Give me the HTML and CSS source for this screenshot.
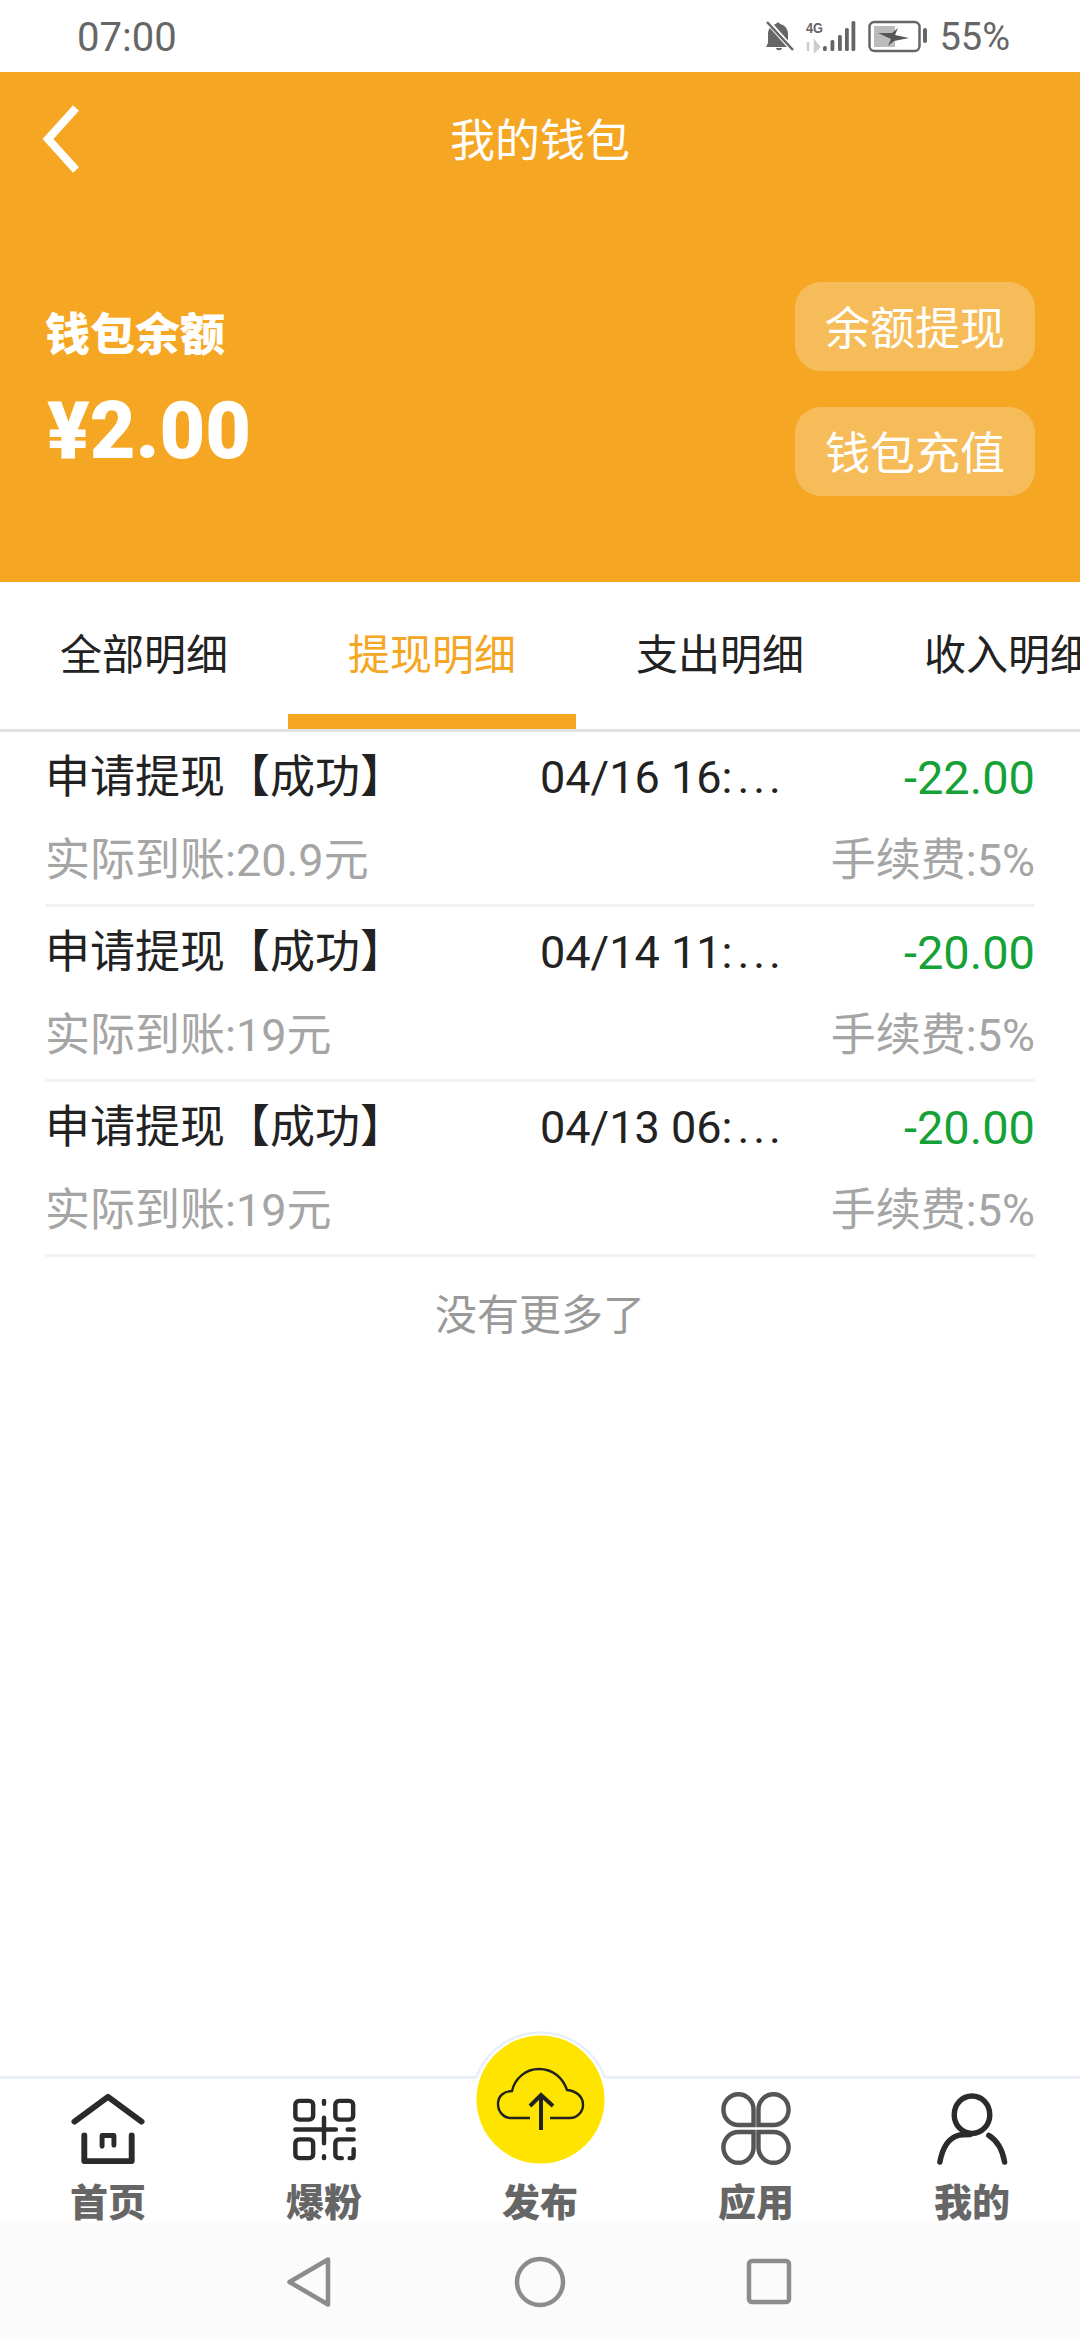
FILE: index.html
```html
<!DOCTYPE html>
<html lang="zh-CN">
<head>
    <meta charset="UTF-8">
    <meta name="viewport" content="width=device-width, initial-scale=1.0">
    <title>我的钱包</title>
    <link rel="stylesheet" href="styles.css">
</head>
<body>

    <div class="status-bar">
        <span class="status-time">07:00</span>
        <div class="status-right">
            <svg class="status-icons" width="175" height="45" viewBox="20 15 175 45">
                <path d="M33 47h-5l2-4V34c0-5 3-9 8-10 1-2 3-2 4 0 5 1 8 5 8 10v9l2 4z" fill="#666"/>
                <path d="M38 48c0 3 6 3 6 0z" fill="#666"/>
                <path d="M30 22l25 28" stroke="#fff" stroke-width="5"/>
                <path d="M29 22l26 28" stroke="#666" stroke-width="2.5"/>
                <text class="net-label" x="68" y="33" textLength="17" lengthAdjust="spacingAndGlyphs">4G</text>
                <path d="M70 42v9M77 42v9l4-4z" stroke="#ccc" stroke-width="2.500" fill="#ccc"/>
                <g fill="#666">
                    <rect x="85" y="46" width="3.800" height="5" rx="1.500"/>
                    <rect x="92.500" y="40" width="3.800" height="11" rx="1.500"/>
                    <rect x="100" y="35" width="3.800" height="16" rx="1.500"/>
                    <rect x="107" y="28" width="3.800" height="23" rx="1.500"/>
                    <rect x="113.500" y="21" width="3.800" height="30" rx="1.500"/>
                </g>
                <rect x="131.500" y="22" width="50" height="29" rx="5" fill="none" stroke="#666" stroke-width="2.500"/>
                <rect x="136" y="26" width="21" height="21" fill="#bbb"/>
                <path d="M140 33h14l6-5-3 7 14 3-15 3-6 5 3-7z" fill="#555"/>
                <rect x="185" y="28" width="4" height="15" rx="2" fill="#666"/>
            </svg>
            <span class="status-battery">55%</span>
        </div>
    </div>

    <header class="wallet-header">
        <div class="top-bar">
            <svg class="back-icon" width="48" height="76" viewBox="0 0 48 76">
                <path d="M36 6L8 37l28 31" fill="none" stroke="#fff" stroke-width="8"/>
            </svg>
            <h1>我的钱包</h1>
        </div>
        <div class="balance-row">
            <div class="balance">
                <div class="balance-label">钱包余额</div>
                <div class="balance-amount">¥2.00</div>
            </div>
            <div class="balance-actions">
                <a class="balance-button">余额提现</a>
                <a class="balance-button">钱包充值</a>
            </div>
        </div>
    </header>

    <nav class="tabs">
        <a class="tab">全部明细</a>
        <a class="tab active">提现明细</a>
        <a class="tab">支出明细</a>
        <a class="tab">收入明细</a>
    </nav>

    <ul class="record-list">
        <li class="record">
            <div class="record-line">
                <span class="record-title">申请提现【成功】</span>
                <span class="record-date">04/16 16:<span class="dots">...</span></span>
                <span class="record-amount">-22.00</span>
            </div>
            <div class="record-line record-sub">
                <span>实际到账:20.9元</span>
                <span>手续费:5%</span>
            </div>
        </li>
        <li class="record">
            <div class="record-line">
                <span class="record-title">申请提现【成功】</span>
                <span class="record-date">04/14 11:<span class="dots">...</span></span>
                <span class="record-amount">-20.00</span>
            </div>
            <div class="record-line record-sub">
                <span>实际到账:19元</span>
                <span>手续费:5%</span>
            </div>
        </li>
        <li class="record">
            <div class="record-line">
                <span class="record-title">申请提现【成功】</span>
                <span class="record-date">04/13 06:<span class="dots">...</span></span>
                <span class="record-amount">-20.00</span>
            </div>
            <div class="record-line record-sub">
                <span>实际到账:19元</span>
                <span>手续费:5%</span>
            </div>
        </li>
    </ul>

    <div class="no-more">没有更多了</div>

    <div class="spacer"></div>

    <footer class="bottom-nav">
        <a class="nav-item">
            <svg width="100" height="80" viewBox="-2 4 100 80" fill="none" stroke="#2b2b2b" stroke-linecap="round" stroke-linejoin="round">
                <path d="M14 37L48 12l34 25" stroke-width="6"/>
                <path d="M24 51v26h48V51" stroke-width="6"/>
                <path d="M42 62V51h12v10" stroke-width="5"/>
            </svg>
            <span>首页</span>
        </a>
        <a class="nav-item">
            <svg width="100" height="80" viewBox="-6 -1 100 80" fill="none" stroke="#2b2b2b" stroke-width="4.500" stroke-linecap="round">
                <rect x="15" y="11" width="18" height="19" rx="4"/>
                <rect x="55.500" y="11" width="18" height="19" rx="4"/>
                <rect x="15" y="50" width="18" height="19" rx="4"/>
                <path d="M15 40h41M68 40h6M44 28v26M44 11v3M44 67v2"/>
                <path d="M74 50H59c-2 0-3.500 1.500-3.500 4v11c0 2.500 1.500 4 3.500 4h3M70 69h2c1.500 0 2-1 2-3v-6"/>
            </svg>
            <span>爆粉</span>
        </a>
        <a class="nav-item">
            <div class="nav-icon-space"></div>
            <span>发布</span>
        </a>
        <a class="nav-item">
            <svg width="100" height="80" viewBox="0 0 100 80" fill="none" stroke="#555" stroke-width="4.500">
                <path d="M47.500 36.500H32.500A15.250 15.600 0 1 1 47.500 21Z"/>
                <path d="M52.500 36.500H67.500A15.250 15.600 0 1 0 52.500 21Z"/>
                <path d="M47.500 43.500H32.500A15.250 15.600 0 1 0 47.500 59Z"/>
                <path d="M52.500 43.500H67.500A15.250 15.600 0 1 1 52.500 59Z"/>
            </svg>
            <span>应用</span>
        </a>
        <a class="nav-item">
            <svg width="100" height="80" viewBox="0 0 100 80" fill="none" stroke="#2b2b2b" stroke-width="5.500" stroke-linecap="round">
                <ellipse cx="50" cy="26" rx="18" ry="19"/>
                <path d="M17.500 74C20 60 26 50 36 47c4-1 8-1 12-1M67 47c8 5 14 15 16 27"/>
            </svg>
            <span>我的</span>
        </a>
        <svg class="publish-fab" width="140" height="145" viewBox="0 0 140 145">
            <circle cx="70.500" cy="74.500" r="68" fill="#fff"/>
            <path d="M6 53A68.500 68.500 0 0 1 135 53" fill="none" stroke="#e8eefa" stroke-width="2.500"/>
            <circle cx="70.500" cy="74.500" r="64" fill="#ffe400"/>
            <path d="M60 93H41C33 93 28 86 28 79c0-8 6-13 14-13C45 53 56 44 69 44c14 0 24 9 28 21 9 1 16 6 16 15 0 7-6 13-13 13H80" fill="none" stroke="#222" stroke-width="2.400"/>
            <path d="M71 105V71M60 81l11-11 12 11" fill="none" stroke="#222" stroke-width="4"/>
        </svg>
    </footer>

    <div class="system-bar">
        <svg width="60" height="60" viewBox="0 0 60 60"><path d="M9.500 30L48 7.500v45z"/></svg>
        <svg width="60" height="60" viewBox="0 0 60 60"><circle cx="30" cy="30" r="23"/></svg>
        <svg width="60" height="60" viewBox="0 0 60 60"><rect x="9" y="9" width="40" height="41" rx="3"/></svg>
    </div>

</body>
</html>
```

FILE: styles.css
```css
:root {
    --primary-color: #f5a623;
    --text-color: #222;
    --muted-color: #a5a5a5;
    --green-color: #14a136;
}

* {
    box-sizing: border-box;
}

body {
    margin: 0;
    width: 1080px;
    height: 2340px;
    display: flex;
    flex-direction: column;
    overflow: hidden;
    background-color: #fff;
    color: var(--text-color);
    font-family: Roboto, "Noto Sans CJK SC", sans-serif;
    font-size: 45px;
}

.status-bar {
    height: 72px;
    padding: 2px 70px 0 77px;
    display: flex;
    align-items: center;
    justify-content: space-between;
    color: #666;
}

.status-time {
    font-size: 40px;
}

.status-right {
    display: flex;
    align-items: center;
    gap: 6px;
}

.status-icons {
    display: block;
}

.net-label {
    font-family: "Liberation Sans", sans-serif;
    font-size: 15px;
    font-weight: bold;
    fill: #666;
}

.status-battery {
    font-size: 38px;
}

.wallet-header {
    height: 510px;
    background-color: var(--primary-color);
    color: #fff;
}

.top-bar {
    height: 136px;
    padding-bottom: 5px;
    position: relative;
    display: flex;
    align-items: center;
    justify-content: center;
}

.top-bar h1 {
    margin: 0;
    font-size: 45px;
    font-weight: normal;
}

.back-icon {
    position: absolute;
    left: 40px;
    top: 30px;
}

.balance-row {
    padding: 74px 45px 0;
    display: flex;
    justify-content: space-between;
}

.balance {
    padding-top: 24px;
}

.balance-label {
    font-weight: 900;
    line-height: 60px;
}

.balance-amount {
    margin-top: 25px;
    padding-left: 2px;
    font-size: 79px;
    font-weight: 900;
    line-height: 80px;
}

.balance-actions {
    display: flex;
    flex-direction: column;
    gap: 36px;
}

.balance-button {
    width: 240px;
    height: 89px;
    padding-bottom: 3px;
    display: flex;
    align-items: center;
    justify-content: center;
    border-radius: 26px;
    background-color: rgba(255, 255, 255, 0.25);
}

.tabs {
    height: 150px;
    display: flex;
    overflow: hidden;
    border-bottom: 3px solid #e2e2e2;
    font-size: 42px;
}

.tab {
    flex: 0 0 288px;
    padding-top: 44px;
    text-align: center;
    line-height: 60px;
    white-space: nowrap;
}

.tab.active {
    color: var(--primary-color);
    border-bottom: 15px solid var(--primary-color);
}

.record-list {
    list-style: none;
    margin: 0;
    padding: 0 45px;
}

.record {
    height: 175px;
    padding-top: 18px;
    border-bottom: 3px solid #f3f3f3;
}

.record-line {
    display: flex;
    justify-content: space-between;
    line-height: 56px;
    white-space: nowrap;
}

.record-title {
    flex: 0 0 495px;
}

.record-date {
    flex: 0 0 240px;
}

.dots {
    padding-left: 5px;
    letter-spacing: 4px;
}

.record-amount {
    flex: 1;
    text-align: right;
    color: var(--green-color);
    font-size: 47px;
}

.record-sub {
    margin-top: 27px;
    color: var(--muted-color);
}

.no-more {
    margin-top: 31px;
    text-align: center;
    font-size: 42px;
    line-height: 56px;
    color: #999;
}

.spacer {
    flex: 1;
}

.bottom-nav {
    height: 147px;
    padding-top: 10px;
    position: relative;
    display: flex;
    border-top: 3px solid #e8eefa;
}

.nav-item {
    flex: 0 0 216px;
    display: flex;
    flex-direction: column;
    align-items: center;
    color: #666;
    font-size: 38px;
    font-weight: 900;
    line-height: 40px;
}

.nav-item span {
    margin-top: 15px;
}

.nav-item svg {
    display: block;
}

.nav-icon-space {
    height: 80px;
}

.publish-fab {
    position: absolute;
    left: 470px;
    top: -54px;
}

.system-bar {
    height: 117px;
    padding-top: 29px;
    display: flex;
    justify-content: center;
    gap: 170px;
    background-color: #fbfbfb;
}

.system-bar svg {
    fill: none;
    stroke: #8c8c8c;
    stroke-width: 4.500;
    stroke-linejoin: round;
}
```
